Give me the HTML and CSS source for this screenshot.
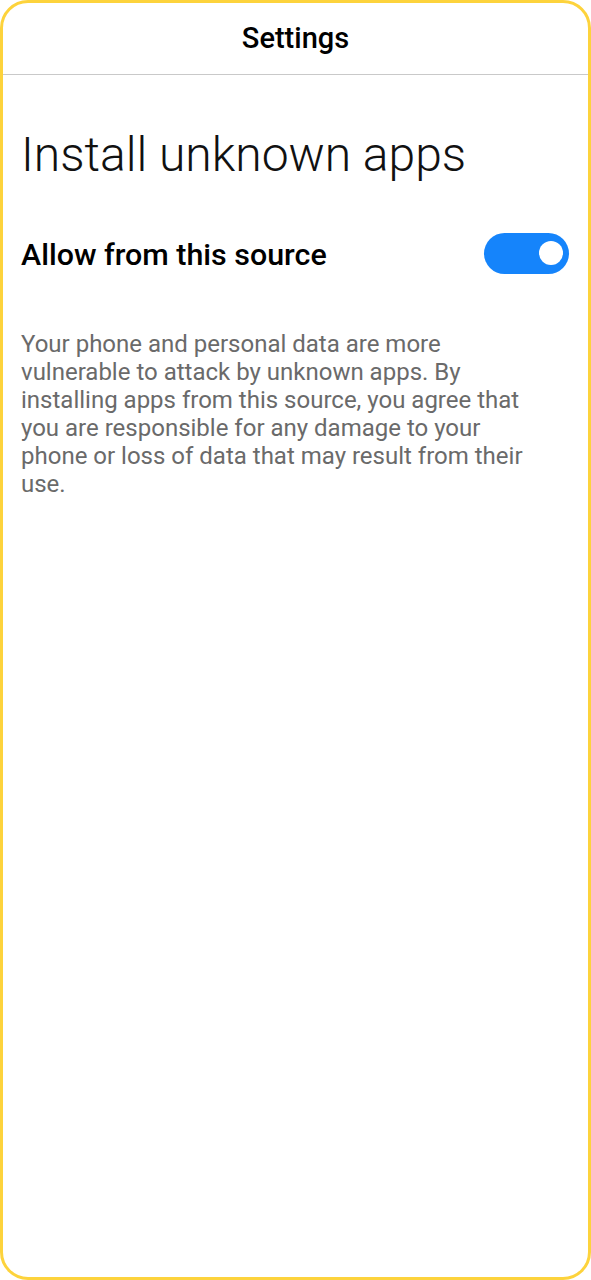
FILE: index.html
```html
<!DOCTYPE html>
<html lang="en">
<head>
<meta charset="utf-8">
<title>Install unknown apps</title>
<link rel="stylesheet" href="styles.css">
</head>
<body>
<div class="frame">
  <header class="appbar">
    <h1 class="appbar-title">Settings</h1>
  </header>
  <main class="content">
    <h2 class="page-title">Install unknown apps</h2>
    <div class="setting-row">
      <span class="setting-label">Allow from this source</span>
      <span class="toggle toggle-on" role="switch" aria-checked="true"><span class="toggle-knob"></span></span>
    </div>
    <p class="description">Your phone and personal data are more vulnerable to attack by unknown apps. By installing apps from this source, you agree that you are responsible for any damage to your phone or loss of data that may result from their use.</p>
  </main>
</div>
</body>
</html>
```

FILE: styles.css
```css
* { box-sizing: border-box; }
html, body { margin: 0; padding: 0; background: #ffffff; }
body { font-family: Roboto, "Noto Sans", "Liberation Sans", sans-serif; }

.frame {
  width: 591px;
  height: 1280px;
  border: 3px solid #fdd33c;
  border-radius: 28px;
  background: #ffffff;
  overflow: hidden;
  display: flex;
  flex-direction: column;
}

.appbar {
  height: 72px;
  border-bottom: 1px solid #c9c9c9;
  display: flex;
  align-items: center;
  justify-content: center;
  padding-bottom: 1px;
}
.appbar-title {
  margin: 0;
  font-size: 29px;
  font-weight: 500;
  color: #000000;
}

.content {
  padding: 0 19px 0 18px;
}

.page-title {
  margin: 50px 0 0 0;
  font-size: 48px;
  font-weight: 300;
  line-height: 60px;
  color: #111111;
}

.setting-row {
  margin-top: 47px;
  display: flex;
  align-items: center;
  justify-content: space-between;
  height: 42px;
}
.setting-label {
  font-size: 30.4px;
  font-weight: 500;
  color: #000000;
  padding-top: 3px;
}

.toggle {
  width: 85px;
  height: 41px;
  border-radius: 21px;
  background: #1584fb;
  display: flex;
  align-items: center;
  justify-content: flex-end;
  padding-right: 6px;
}
.toggle-knob {
  width: 24px;
  height: 24px;
  border-radius: 50%;
  background: #ffffff;
}

.description {
  margin: 56px 0 0 0;
  font-size: 24px;
  line-height: 28px;
  color: #6a6a6a;
  max-width: 530px;
}
```
